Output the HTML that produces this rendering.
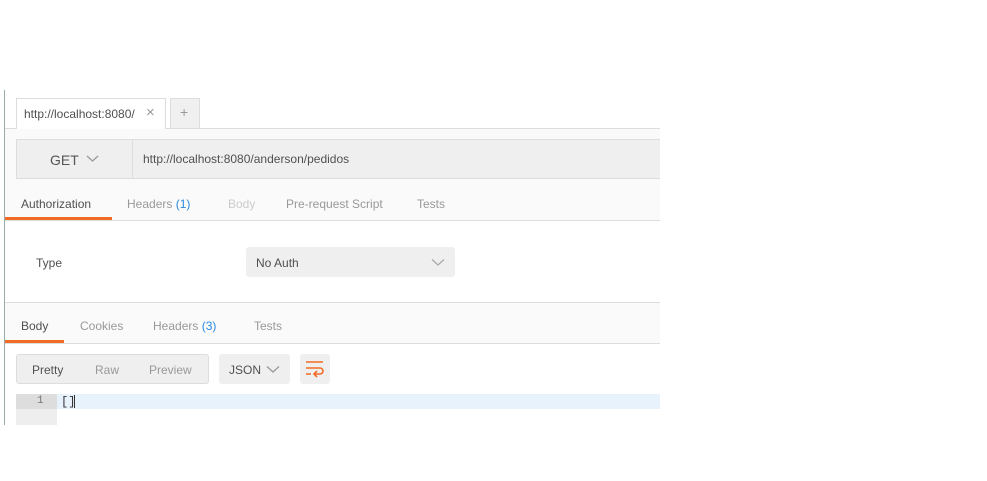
<!DOCTYPE html>
<html><head><style>
body{margin:0;width:987px;height:481px;background:#fff;font-family:"Liberation Sans",sans-serif;font-size:12px;color:#505050;position:relative;overflow:hidden}
.a{position:absolute;box-sizing:border-box}
.t{position:absolute;white-space:nowrap}
</style></head><body>
<div class="a" style="left:4px;top:90px;width:1px;height:335px;background:#9aa"></div>
<div class="a" style="left:5px;top:128px;width:655px;height:1px;background:#ddd"></div>
<div class="a" style="left:16px;top:98px;width:150px;height:31px;background:#fff;border:1px solid #ddd;border-bottom:none"></div>
<div class="t" style="left:24px;top:107px;color:#505050">http://localhost:8080/</div>
<div class="t" style="left:146px;top:104px;color:#999;font-size:15px">×</div>
<div class="a" style="left:170px;top:98px;width:30px;height:30px;background:#f0f0f0;border:1px solid #ddd;border-bottom:none"></div>
<div class="t" style="left:180px;top:104px;color:#999;font-size:14px">+</div>
<div class="a" style="left:5px;top:129px;width:655px;height:92px;background:#fafafa"></div>
<div class="a" style="left:16px;top:139px;width:644px;height:40px;background:#efefef;border:1px solid #ddd;border-right:none"></div>
<div class="a" style="left:132px;top:140px;width:1px;height:38px;background:#ddd"></div>
<div class="t" style="left:50px;top:152px;font-size:14px;color:#555">GET</div>
<svg class="a" style="left:86px;top:154px" width="13" height="9"><path d="M1 2l5.5 5 5.5-5" fill="none" stroke="#999" stroke-width="1.3"/></svg>
<div class="t" style="left:143px;top:152px;color:#505050">http://localhost:8080/anderson/pedidos</div>
<div class="t" style="left:21px;top:197px;color:#505050">Authorization</div>
<div class="a" style="left:5px;top:217px;width:107px;height:3px;background:#f26b24"></div>
<div class="t" style="left:127px;top:197px;color:#999">Headers <span style="color:#2a8ae0">(1)</span></div>
<div class="t" style="left:228px;top:197px;color:#ccc">Body</div>
<div class="t" style="left:286px;top:197px;color:#999">Pre-request Script</div>
<div class="t" style="left:417px;top:197px;color:#999">Tests</div>
<div class="a" style="left:5px;top:220px;width:655px;height:1px;background:#ddd"></div>
<div class="t" style="left:36px;top:256px">Type</div>
<div class="a" style="left:246px;top:247px;width:209px;height:30px;background:#efefef;border-radius:3px"></div>
<div class="t" style="left:256px;top:256px;color:#505050">No Auth</div>
<svg class="a" style="left:431px;top:258px" width="14" height="9"><path d="M1 1.5l6 5.5 6-5.5" fill="none" stroke="#aaa" stroke-width="1.3"/></svg>
<div class="a" style="left:5px;top:302px;width:655px;height:1px;background:#ddd"></div>
<div class="a" style="left:5px;top:303px;width:655px;height:40px;background:#fafafa"></div>
<div class="t" style="left:21px;top:319px;color:#505050">Body</div>
<div class="a" style="left:5px;top:340px;width:59px;height:3px;background:#f26b24"></div>
<div class="t" style="left:80px;top:319px;color:#999">Cookies</div>
<div class="t" style="left:153px;top:319px;color:#999">Headers <span style="color:#2a8ae0">(3)</span></div>
<div class="t" style="left:254px;top:319px;color:#999">Tests</div>
<div class="a" style="left:5px;top:343px;width:655px;height:1px;background:#ddd"></div>
<div class="a" style="left:16px;top:354px;width:193px;height:30px;background:#efefef;border:1px solid #ddd;border-radius:3px"></div>
<div class="t" style="left:32px;top:363px;color:#505050">Pretty</div>
<div class="t" style="left:95px;top:363px;color:#999">Raw</div>
<div class="t" style="left:149px;top:363px;color:#999">Preview</div>
<div class="a" style="left:219px;top:354px;width:71px;height:30px;background:#efefef;border-radius:3px"></div>
<div class="t" style="left:229px;top:363px;color:#505050">JSON</div>
<svg class="a" style="left:266px;top:365px" width="14" height="9"><path d="M1 1.5l6 5.5 6-5.5" fill="none" stroke="#999" stroke-width="1.3"/></svg>
<div class="a" style="left:300px;top:354px;width:30px;height:30px;background:#efefef;border-radius:3px"></div>
<svg class="a" style="left:305px;top:360px" width="20" height="18"><path d="M1 2h17M1 8h14a3 3 0 0 1 0 6h-5M1 14h5" fill="none" stroke="#f26b24" stroke-width="1.6"/><path d="M12 11l-3 3 3 3" fill="none" stroke="#f26b24" stroke-width="1.6"/></svg>
<div class="a" style="left:16px;top:394px;width:644px;height:15px;background:#e8f2fd"></div>
<div class="a" style="left:16px;top:394px;width:41px;height:31px;background:#eee"></div>
<div class="a" style="left:16px;top:394px;width:41px;height:15px;background:#ddd"></div>
<div class="t" style="left:37px;top:395px;font-size:11px;color:#777;font-family:'Liberation Mono',monospace">1</div>
<div class="t" style="left:61px;top:395px;font-size:12px;color:#333;font-family:'Liberation Mono',monospace">[]</div>
<div class="a" style="left:74px;top:395px;width:1px;height:13px;background:#333"></div>
</body></html>
